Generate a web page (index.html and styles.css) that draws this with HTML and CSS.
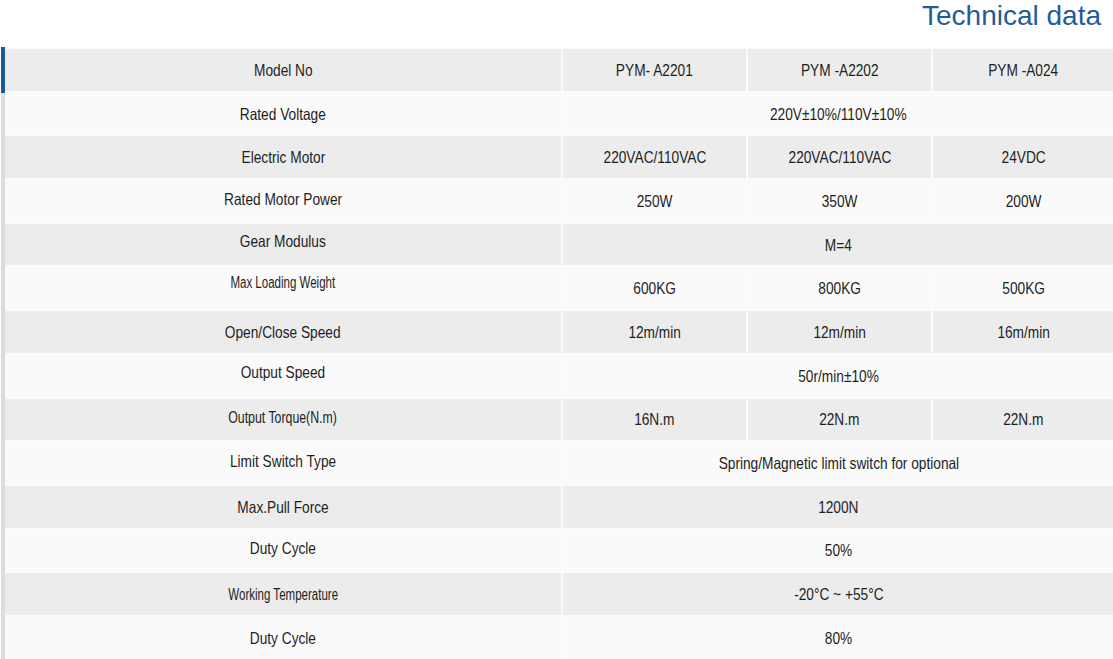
FILE: index.html
```html
<!DOCTYPE html>
<html lang="en">
<head>
<meta charset="utf-8">
<title>Technical data</title>
<link rel="stylesheet" href="styles.css">
</head>
<body>
<div class="page">
  <h1 class="title">Technical data</h1>
  <table class="spec">
    <colgroup>
      <col class="c-label">
      <col class="c-val">
      <col class="c-val">
      <col class="c-last">
    </colgroup>
    <tbody>
      <tr class="head"><td class="label"><span class="t">Model No</span></td><td><span class="t">PYM- A2201</span></td><td><span class="t">PYM -A2202</span></td><td><span class="t">PYM -A024</span></td></tr>
      <tr><td class="label"><span class="t">Rated Voltage</span></td><td colspan="3"><span class="t">220V±10%/110V±10%</span></td></tr>
      <tr><td class="label"><span class="t">Electric Motor</span></td><td><span class="t">220VAC/110VAC</span></td><td><span class="t">220VAC/110VAC</span></td><td><span class="t">24VDC</span></td></tr>
      <tr><td class="label up1"><span class="t">Rated Motor Power</span></td><td><span class="t">250W</span></td><td><span class="t">350W</span></td><td><span class="t">200W</span></td></tr>
      <tr><td class="label up"><span class="t">Gear Modulus</span></td><td colspan="3"><span class="t">M=4</span></td></tr>
      <tr><td class="label up2"><span class="t narrow">Max Loading Weight</span></td><td><span class="t">600KG</span></td><td><span class="t">800KG</span></td><td><span class="t">500KG</span></td></tr>
      <tr><td class="label"><span class="t">Open/Close Speed</span></td><td><span class="t">12m/min</span></td><td><span class="t">12m/min</span></td><td><span class="t">16m/min</span></td></tr>
      <tr><td class="label up"><span class="t">Output Speed</span></td><td colspan="3"><span class="t">50r/min±10%</span></td></tr>
      <tr><td class="label up1"><span class="t narrow2">Output Torque(N.m)</span></td><td><span class="t">16N.m</span></td><td><span class="t">22N.m</span></td><td><span class="t">22N.m</span></td></tr>
      <tr><td class="label up1"><span class="t">Limit Switch Type</span></td><td colspan="3"><span class="t">Spring/Magnetic limit switch for optional</span></td></tr>
      <tr><td class="label"><span class="t">Max.Pull Force</span></td><td colspan="3"><span class="t">1200N</span></td></tr>
      <tr><td class="label up1"><span class="t">Duty Cycle</span></td><td colspan="3"><span class="t">50%</span></td></tr>
      <tr><td class="label"><span class="t narrow">Working Temperature</span></td><td colspan="3"><span class="t">-20°C ~ +55°C</span></td></tr>
      <tr><td class="label"><span class="t">Duty Cycle</span></td><td colspan="3"><span class="t">80%</span></td></tr>
    </tbody>
  </table>
</div>
</body>
</html>
```

FILE: styles.css
```css
html, body {
  margin: 0;
  padding: 0;
  background: #ffffff;
}

.page {
  width: 1113px;
  font-family: "Liberation Sans", Arial, sans-serif;
  color: #1e1e1e;
}

.title {
  margin: 0;
  height: 47px;
  padding: 0 12px 0 0;
  text-align: right;
  font-family: "Liberation Sans", Arial, sans-serif;
  font-weight: normal;
  font-size: 28px;
  line-height: 32px;
  color: #1f5c9c;
}

.spec {
  width: 1112px;
  margin-left: 1px;
  border-collapse: collapse;
  table-layout: fixed;
  font-size: 16.5px;
}

.c-label { width: 559px; }
.c-val { width: 185px; }
.c-last { width: 183px; }

.spec tr {
  height: 43.7px;
}

.spec td {
  padding: 1px 0 0 0;
  text-align: center;
  vertical-align: middle;
  border: 2px solid #fbfbfb;
  background: #fafafa;
  white-space: nowrap;
}

.spec tr:nth-child(odd) td {
  background: #ececec;
}

.spec td.label {
  border-left: 4px solid #dcdcdc;
}

.spec tr.head td.label {
  border-left-color: #1a5a96;
}

.t {
  display: inline-block;
  transform: scaleX(0.83);
  transform-origin: center;
}

.t.narrow {
  font-size: 16px;
  transform: scaleX(0.72);
}

.t.narrow2 {
  font-size: 16px;
  transform: scaleX(0.77);
}

.spec td.up1 {
  padding: 0 0 3px 0;
}

.spec td.up {
  padding: 0 0 6px 0;
}

.spec td.up2 {
  padding: 0 0 11px 0;
}
```
